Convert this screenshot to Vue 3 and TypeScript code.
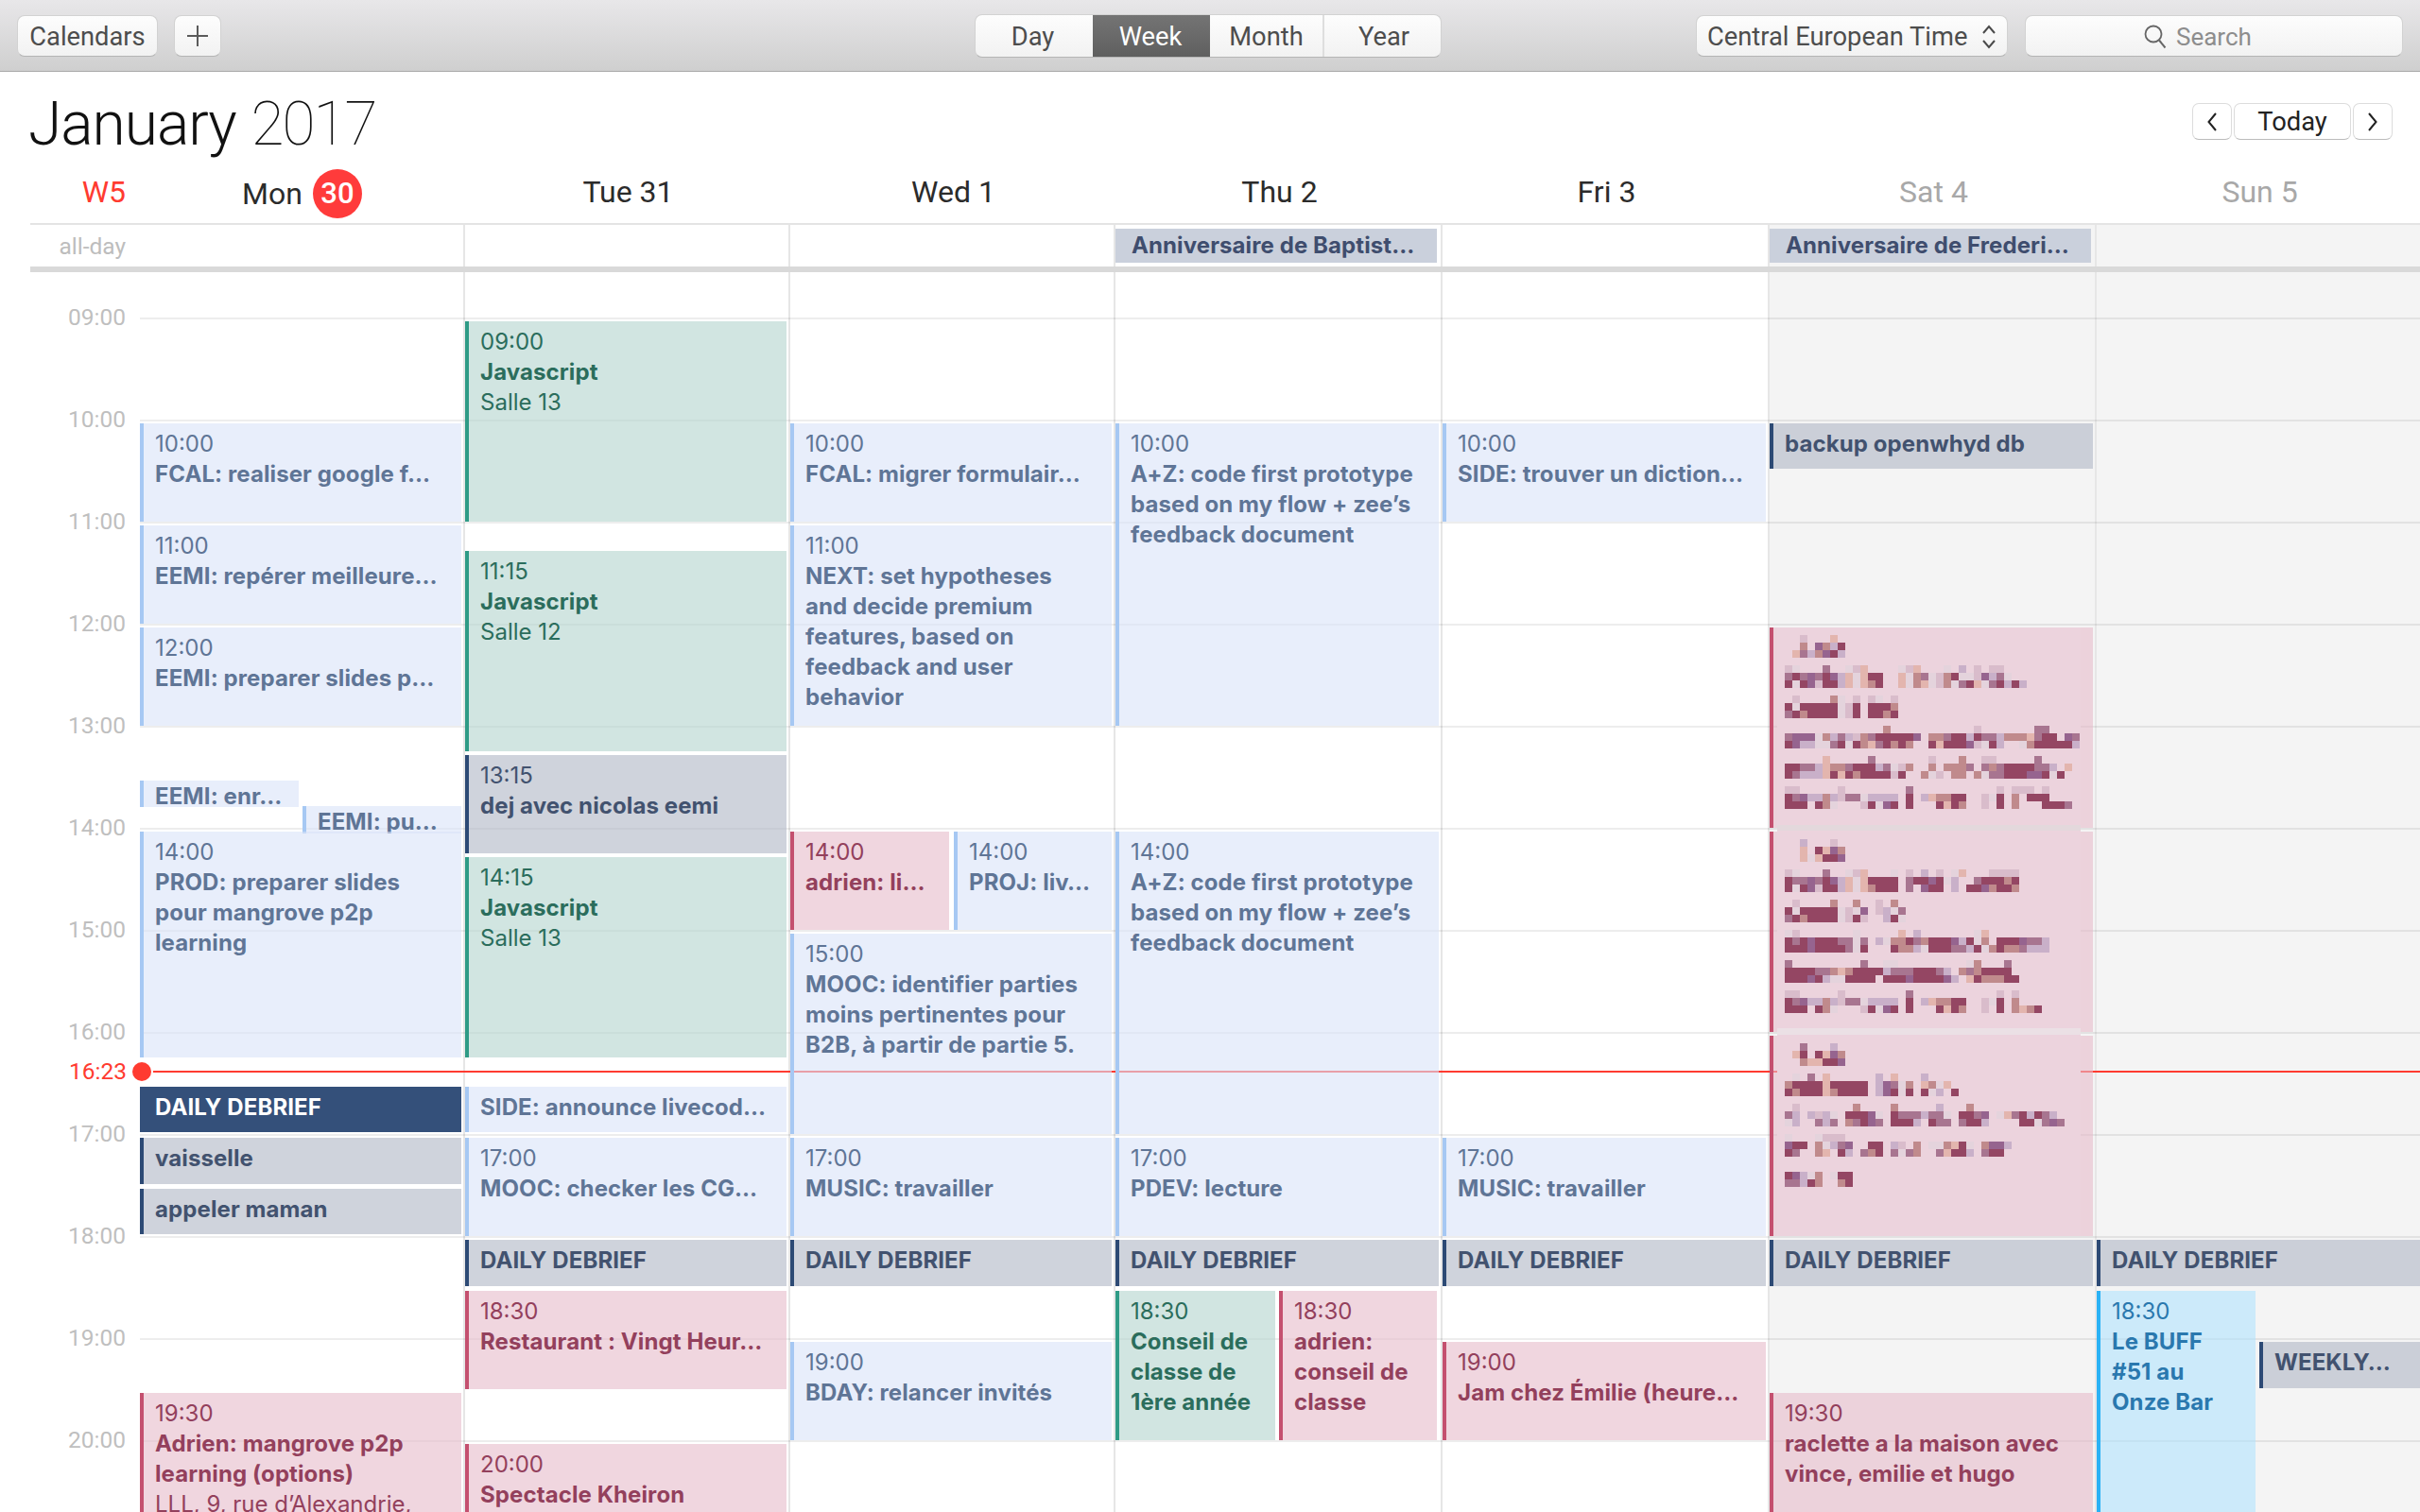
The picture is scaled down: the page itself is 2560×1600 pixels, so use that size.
<script setup lang="ts">
type Kind = 'blue' | 'pink' | 'green' | 'navy' | 'solid' | 'sky'
interface Ev {
  d: number
  s: number
  e: number
  c: Kind
  t?: string
  lines: string[]
  sub?: string[]
  x?: number
  w?: number
  short?: boolean
}

const days = [
  { label: 'Tue 31', muted: false },
  { label: 'Wed 1', muted: false },
  { label: 'Thu 2', muted: false },
  { label: 'Fri 3', muted: false },
  { label: 'Sat 4', muted: true },
  { label: 'Sun 5', muted: true },
]
const allDay = [
  '', '', '', 'Anniversaire de Baptist…', '', 'Anniversaire de Frederi…', '',
]
const hours = [9, 10, 11, 12, 13, 14, 15, 16, 17, 18, 19, 20]
const hourY = (h: number) => (h - 9) * 108 + 48
const colW = [344, 344, 344, 346, 346, 346, 348]

const evs: Ev[] = [
  // Monday
  { d: 0, s: 10, e: 11, c: 'blue', t: '10:00', lines: ['FCAL: realiser google f…'] },
  { d: 0, s: 11, e: 12, c: 'blue', t: '11:00', lines: ['EEMI: repérer meilleure…'] },
  { d: 0, s: 12, e: 13, c: 'blue', t: '12:00', lines: ['EEMI: preparer slides p…'] },
  { d: 0, s: 13.5, e: 13.8, c: 'blue', lines: ['EEMI: enr…'], w: 168, short: true },
  { d: 0, s: 13.75, e: 14.06, c: 'blue', lines: ['EEMI: pu…'], x: 174, w: 168, short: true },
  { d: 0, s: 14, e: 16.25, c: 'blue', t: '14:00', lines: ['PROD: preparer slides', 'pour mangrove p2p', 'learning'] },
  { d: 0, s: 16.5, e: 16.98, c: 'solid', lines: ['DAILY DEBRIEF'] },
  { d: 0, s: 17, e: 17.49, c: 'navy', lines: ['vaisselle'] },
  { d: 0, s: 17.5, e: 17.98, c: 'navy', lines: ['appeler maman'] },
  { d: 0, s: 19.5, e: 21, c: 'pink', t: '19:30', lines: ['Adrien: mangrove p2p', 'learning (options)'], sub: ['LLL, 9, rue d’Alexandrie,'] },
  // Tuesday
  { d: 1, s: 9, e: 11, c: 'green', t: '09:00', lines: ['Javascript'], sub: ['Salle 13'] },
  { d: 1, s: 11.25, e: 13.25, c: 'green', t: '11:15', lines: ['Javascript'], sub: ['Salle 12'] },
  { d: 1, s: 13.25, e: 14.25, c: 'navy', t: '13:15', lines: ['dej avec nicolas eemi'] },
  { d: 1, s: 14.25, e: 16.25, c: 'green', t: '14:15', lines: ['Javascript'], sub: ['Salle 13'] },
  { d: 1, s: 16.5, e: 16.98, c: 'blue', lines: ['SIDE: announce livecod…'] },
  { d: 1, s: 17, e: 18, c: 'blue', t: '17:00', lines: ['MOOC: checker les CG…'] },
  { d: 1, s: 18, e: 18.49, c: 'navy', lines: ['DAILY DEBRIEF'] },
  { d: 1, s: 18.5, e: 19.5, c: 'pink', t: '18:30', lines: ['Restaurant : Vingt Heur…'] },
  { d: 1, s: 20, e: 21, c: 'pink', t: '20:00', lines: ['Spectacle Kheiron'] },
  // Wednesday
  { d: 2, s: 10, e: 11, c: 'blue', t: '10:00', lines: ['FCAL: migrer formulair…'] },
  { d: 2, s: 11, e: 13, c: 'blue', t: '11:00', lines: ['NEXT: set hypotheses', 'and decide premium', 'features, based on', 'feedback and user', 'behavior'] },
  { d: 2, s: 14, e: 15, c: 'pink', t: '14:00', lines: ['adrien: li…'], w: 168 },
  { d: 2, s: 14, e: 15, c: 'blue', t: '14:00', lines: ['PROJ: liv…'], x: 175, w: 167 },
  { d: 2, s: 15, e: 17, c: 'blue', t: '15:00', lines: ['MOOC: identifier parties', 'moins pertinentes pour', 'B2B, à partir de partie 5.'] },
  { d: 2, s: 17, e: 18, c: 'blue', t: '17:00', lines: ['MUSIC: travailler'] },
  { d: 2, s: 18, e: 18.49, c: 'navy', lines: ['DAILY DEBRIEF'] },
  { d: 2, s: 19, e: 20, c: 'blue', t: '19:00', lines: ['BDAY: relancer invités'] },
  // Thursday
  { d: 3, s: 10, e: 13, c: 'blue', t: '10:00', lines: ['A+Z: code first prototype', 'based on my flow + zee’s', 'feedback document'] },
  { d: 3, s: 14, e: 17, c: 'blue', t: '14:00', lines: ['A+Z: code first prototype', 'based on my flow + zee’s', 'feedback document'] },
  { d: 3, s: 17, e: 18, c: 'blue', t: '17:00', lines: ['PDEV: lecture'] },
  { d: 3, s: 18, e: 18.49, c: 'navy', lines: ['DAILY DEBRIEF'] },
  { d: 3, s: 18.5, e: 20, c: 'green', t: '18:30', lines: ['Conseil de', 'classe de', '1ère année'], w: 169 },
  { d: 3, s: 18.5, e: 20, c: 'pink', t: '18:30', lines: ['adrien:', 'conseil de', 'classe'], x: 175, w: 167 },
  // Friday
  { d: 4, s: 10, e: 11, c: 'blue', t: '10:00', lines: ['SIDE: trouver un diction…'] },
  { d: 4, s: 17, e: 18, c: 'blue', t: '17:00', lines: ['MUSIC: travailler'] },
  { d: 4, s: 18, e: 18.49, c: 'navy', lines: ['DAILY DEBRIEF'] },
  { d: 4, s: 19, e: 20, c: 'pink', t: '19:00', lines: ['Jam chez Émilie (heure…'] },
  // Saturday
  { d: 5, s: 10, e: 10.48, c: 'navy', lines: ['backup openwhyd db'] },
  { d: 5, s: 12, e: 14, c: 'pink', lines: [] },
  { d: 5, s: 14, e: 16, c: 'pink', lines: [] },
  { d: 5, s: 16, e: 18, c: 'pink', lines: [] },
  { d: 5, s: 18, e: 18.49, c: 'navy', lines: ['DAILY DEBRIEF'] },
  { d: 5, s: 19.5, e: 21, c: 'pink', t: '19:30', lines: ['raclette a la maison avec', 'vince, emilie et hugo'] },
  // Sunday
  { d: 6, s: 18, e: 18.49, c: 'navy', lines: ['DAILY DEBRIEF'] },
  { d: 6, s: 18.5, e: 21, c: 'sky', t: '18:30', lines: ['Le BUFF', '#51 au', 'Onze Bar'], w: 168 },
  { d: 6, s: 19, e: 19.49, c: 'navy', lines: ['WEEKLY…'], x: 174, w: 174 },
]

const evStyle = (ev: Ev) => {
  const top = hourY(ev.s) + 4
  const bottom = hourY(ev.e)
  return {
    top: `${top}px`,
    height: `${bottom - top}px`,
    left: `${ev.x ?? 2}px`,
    width: `${ev.w ?? colW[ev.d] - 4}px`,
  }
}
const dayEvents = (d: number) => evs.filter((e) => e.d === d)

// Pixelated mosaic of the private Saturday events
const palette: Record<string, string> = {
  D: '#944663', M: '#a87590', V: '#96648f', R: '#c08a8c',
  L: '#c9b0c9', P: '#e3b5ae', F: '#d9bccb', A: '#e4d3dc',
}
const mosaic: { y: number; rows: string[] }[] = [
  { y: 8, rows: [
    '..F...P.', '..R.VRLD', '.PMLRVDL',
    'FA...M..AFP....AFP...A.L.F.FF', 'MDMVMDVLPAPDD..PARMAFRDAAFVLMA', 'DADVFDDLPAPRD..PARPAFRAMDPAMDLDL',
    '.F....RA.F.FA.F', 'DADDDDDAFD.DDDR', 'MDRDDDDAFD.DDRD',
    '.............R...........F.......MM', 'MVVVARLMLFRMDDDDDV.RRMDDLDMMLRRRPMDD.VM', 'DVLLAAMDADRPMDRDR..DPDDDVFADL..ARDDDDDL',
    '.....P.....M.......F...R..FF.....M', 'DDMMLPRRMDDDLMAFR..R.RRRM.MRMDDDDMML.P', 'DMLLLPDPDRDDDDFD..RAF.RR.RAMMDDDVVDAD',
    'FF.....F........M...........F.FFF.F', 'DMVLLRLFMMALLLL.D.LPRRDD..FAD.R.DDD', 'DDD.DRA...FDAVD.D...DPDR..F.D.R...DDDM',
  ] },
  { y: 224, rows: [
    '..L...F.', '..P.DPVR', '..PAPDDV',
    'FA...M..AFP...A.F.L.F.AP...FFFF', 'DMMVMDVLPAPDDDD.MDDVDAL..MDDDRD', 'DADVFDDLPAPRDDD.M.VDD.L.DDVRDDR',
    '.F....R..R..F.R', 'DADDDDDAFAV.FLAM', 'MDRDDDDAFDF..LDA',
    'AF.......A.....P.L.......AP', 'DMDVDDDMMAM.LARRDMRDDDVLDAR.DDDVMML', 'DDDVDDDDMAD...DRRLADDDMMLDARDRRMLLL',
    'M.........M..AA.........AR...M', 'DDDDMMRPRDDDDLMMMDDDML.RMRDDDD', 'DDDVDLAADDDD.DDDVDDDDVL.PDRRRDD',
    'FF.....F........M...........F.F', 'DMVLLRLFMMALLLL.D.LPRRDD..FAD.R', 'DDD.DRA...FDAVD.D...DPDR..F.D.RPRD',
  ] },
  { y: 440, rows: [
    '..M...L.', '.PD.DPVR', '..RPPDDV',
    '.A.M.P......L.P...L', 'RDDDDPDDDDD.LVMAR.PRAP', 'DRDDDPRDDDD.LVDAD.DAL.D',
    '.F.......R....R.....L...R', 'ML.LFLA.DDDVA.DMMMLMMA.DDMV.APMDLDML', 'AL..MLM.RMDVM.DDDL.DMM.MDDL....DDAMVM',
    'A...AFFF', 'VDD.RALMV..DD.LF.R.AARPDA.RVVL', 'DM..RP.DL.MRD.MAMR..MPDDL.MDD',
    '', 'DVLAR.ADD', 'MMLDR..RD',
  ] },
]
const blocks = mosaic.flatMap((m) =>
  m.rows.flatMap((row, r) =>
    [...row].flatMap((ch, c) =>
      palette[ch]
        ? [{ key: `${m.y}-${r}-${c}`, x: 8 + c * 8, y: m.y + Math.floor(r / 3) * 32 + (r % 3) * 8, fill: palette[ch] }]
        : [],
    ),
  ),
)
</script>

<template>
  <div class="window">
    <header class="toolbar">
      <button class="btn cal-btn">Calendars</button>
      <button class="btn plus-btn" aria-label="Add">
        <svg width="24" height="24" viewBox="0 0 24 24"><path d="M12 1v22M1 12h22" stroke="#5b5b5b" stroke-width="2" fill="none" /></svg>
      </button>
      <nav class="seg">
        <span class="seg-item day">Day</span>
        <span class="seg-item week">Week</span>
        <span class="seg-item month">Month</span>
        <span class="seg-item year">Year</span>
      </nav>
      <button class="btn tz-btn">
        <span>Central European Time</span>
        <svg width="16" height="26" viewBox="0 0 16 26"><path d="M2 9l6-7 6 7M2 17l6 7 6-7" stroke="#4a4a4a" stroke-width="2" fill="none" /></svg>
      </button>
      <div class="btn search">
        <svg width="24" height="26" viewBox="0 0 24 26"><circle cx="10" cy="10" r="8.5" stroke="#666" stroke-width="1.8" fill="none" /><path d="M16 16.5l6.5 8" stroke="#666" stroke-width="2" fill="none" /></svg>
        <span>Search</span>
      </div>
    </header>

    <section class="title-row">
      <h1 class="title"><span class="month-name">January</span> <span class="year-name">2017</span></h1>
      <div class="nav">
        <button class="nav-btn arrow" aria-label="Previous">
          <svg width="12" height="22" viewBox="0 0 12 22"><path d="M10 2L2.5 11l7.5 9" stroke="#222" stroke-width="2" fill="none" /></svg>
        </button>
        <button class="nav-btn today">Today</button>
        <button class="nav-btn arrow" aria-label="Next">
          <svg width="12" height="22" viewBox="0 0 12 22"><path d="M2 2l7.5 9L2 20" stroke="#222" stroke-width="2" fill="none" /></svg>
        </button>
      </div>
    </section>

    <section class="day-head">
      <div class="week-no">W5</div>
      <div class="day-name mon">
        <span class="mon-text">Mon</span>
        <span class="badge">30</span>
      </div>
      <div v-for="d in days" :key="d.label" class="day-name" :class="{ muted: d.muted }">{{ d.label }}</div>
    </section>

    <section class="all-day">
      <div class="all-day-label">all-day</div>
      <div
        v-for="(title, i) in allDay"
        :key="i"
        class="all-day-cell"
        :class="{ first: i === 0, weekend: i >= 5 }"
      >
        <div v-if="title" class="all-day-event">{{ title }}</div>
      </div>
    </section>

    <section class="grid">
      <div class="col-layer">
        <div class="gutter"></div>
        <div
          v-for="i in 7"
          :key="i"
          class="bg-col"
          :class="{ first: i === 1, weekend: i >= 6 }"
        ></div>
      </div>

      <div v-for="h in hours" :key="h" class="hour-line" :style="{ top: `${hourY(h)}px` }"></div>
      <div v-for="h in hours" :key="'l' + h" class="hour-label" :style="{ top: `${hourY(h) - 16}px` }">
        {{ String(h).padStart(2, '0') }}:00
      </div>

      <div class="now-label">16:23</div>
      <div class="now-dot"></div>
      <div class="now-line"></div>

      <div class="col-layer events">
        <div class="gutter"></div>
        <div v-for="(_, d) in 7" :key="d" class="ev-col">
          <article
            v-for="(ev, j) in dayEvents(d)"
            :key="j"
            class="event"
            :class="[ev.c, { short: ev.short }]"
            :style="evStyle(ev)"
          >
            <div v-if="ev.t" class="ln">{{ ev.t }}</div>
            <div v-for="l in ev.lines" :key="l" class="ln b">{{ l }}</div>
            <div v-for="l in ev.sub ?? []" :key="l" class="ln">{{ l }}</div>
          </article>
          <svg v-if="d === 5" class="mosaic" width="321" height="644" viewBox="0 0 321 644" shape-rendering="crispEdges">
            <rect x="0" y="0" width="321" height="209" fill="#ecd3dd" />
            <rect x="0" y="209" width="321" height="6" fill="#e3d8dc" />
            <rect x="0" y="215" width="321" height="209" fill="#ecd3dd" />
            <rect x="0" y="424" width="321" height="7" fill="#ebe0e5" />
            <rect x="0" y="431" width="321" height="213" fill="#ecd3dd" />
            <rect v-for="b in blocks" :key="b.key" :x="b.x" :y="b.y" width="8" height="8" :fill="b.fill" />
          </svg>
        </div>
      </div>
    </section>
  </div>
</template>

<style>
html, body { margin: 0; background: #fff; overflow: hidden; }
</style>

<style scoped>
* { box-sizing: border-box; }
.window {
  width: 2560px;
  height: 1600px;
  overflow: hidden;
  font-family: Roboto, "Liberation Sans", sans-serif;
  background: #fff;
  display: flex;
  flex-direction: column;
}
.toolbar {
  height: 76px;
  flex: none;
  display: flex;
  align-items: flex-start;
  padding: 16px 0 0 18px;
  background: linear-gradient(#e8e7e9, #cfcfcf);
  border-bottom: 1px solid #a9a9a9;
}
.btn {
  height: 44px;
  border: 1px solid #d2d2d2;
  border-bottom-color: #b5b5b5;
  border-radius: 8px;
  background: linear-gradient(#fdfdfd, #f2f2f2);
  font: 400 27.3px Roboto, sans-serif;
  color: #4d4d4d;
  padding: 2px 0 0;
  display: flex;
  align-items: center;
}
.cal-btn { width: 149px; justify-content: center; }
.plus-btn { width: 50px; margin-left: 17px; justify-content: center; padding-top: 0; }
.seg {
  width: 494px;
  height: 46px;
  margin-left: 797px;
  margin-top: -1px;
  display: flex;
  border: 1px solid #d2d2d2;
  border-bottom-color: #b5b5b5;
  border-radius: 8px;
  background: linear-gradient(#fdfdfd, #f2f2f2);
  overflow: hidden;
  font-size: 27.3px;
  color: #4d4d4d;
}
.seg-item { display: flex; align-items: center; justify-content: center; padding-top: 2px; }
.day { width: 124px; padding-right: 3px; }
.week { width: 124px; background: linear-gradient(#747474, #5f5f5f); color: #fff; padding-right: 2px; }
.month { width: 121px; border-right: 2px solid #dedede; }
.year { flex: 1; padding-left: 3px; }
.tz-btn { width: 330px; margin-left: 269px; padding: 2px 11px 0; justify-content: space-between; }
.search { width: 400px; margin-left: 18px; justify-content: flex-start; padding-left: 125px; gap: 10px; color: #8d8d8d; font-size: 26px; }

.title-row {
  height: 99px;
  flex: none;
  display: flex;
  justify-content: space-between;
  padding: 0 29px 0 30px;
}
.title {
  margin: 18px 0 0;
  font-size: 64px;
  line-height: 75px;
  color: #111;
  font-weight: 300;
}
.month-name { letter-spacing: -1px; }
.year-name { font-weight: 100; letter-spacing: -2px; }
.nav { display: flex; margin-top: 33px; gap: 2px; height: 39px; }
.nav-btn {
  border: 1px solid #dcdcdc;
  border-bottom-color: #bbb;
  border-radius: 7px;
  background: #fff;
  height: 39px;
  padding: 0;
  font: 400 27.3px Roboto, sans-serif;
  color: #222;
  display: flex;
  align-items: center;
  justify-content: center;
}
.arrow { width: 42px; }
.today { width: 124px; padding-top: 1px; }

.day-head {
  height: 61px;
  flex: none;
  display: grid;
  grid-template-columns: 146px 344px 344px 344px 346px 346px 346px 344px;
  align-items: center;
  font-size: 32px;
  color: #2b2b2b;
}
.week-no { color: #ff3b30; text-align: right; padding-right: 13px; margin-top: -6px; }
.day-name { text-align: center; margin-top: -6px; padding-left: 5px; }
.day-name.muted { color: #a8a8a8; }
.mon { display: flex; align-items: center; justify-content: center; gap: 11px; margin-top: -2px; padding-left: 3px; }
.badge {
  width: 52px;
  height: 52px;
  border-radius: 50%;
  background: #ff3b3b;
  color: #fff;
  font-weight: 500;
  font-size: 31px;
  display: flex;
  align-items: center;
  justify-content: center;
}

.all-day {
  height: 46px;
  margin-left: 32px;
  flex: none;
  border-top: 2px solid #e4e4e4;
  display: grid;
  grid-template-columns: 114px 344px 344px 344px 346px 346px 346px 344px;
}
.all-day-label { color: #bdbdbd; font-size: 24.5px; text-align: right; padding: 8px 13px 0 0; line-height: 30px; }
.all-day-cell { border-left: 2px solid #e6e6e6; padding: 4px 4px 0 0; }
.all-day-cell.first { border-left: 0; }
.all-day-cell.weekend { background: #f4f4f4; }
.all-day-event {
  height: 36px;
  background: #cad0dc;
  color: #3f4d6e;
  font-family: Inter, sans-serif;
  font-weight: 700;
  font-size: 24px;
  letter-spacing: 0.1px;
  line-height: 36px;
  padding-left: 17px;
  white-space: nowrap;
  overflow: hidden;
}

.grid {
  position: relative;
  height: 1318px;
  flex: none;
  margin-left: 32px;
  border-top: 6px solid #d9d9d9;
  overflow: hidden;
}
.col-layer {
  position: absolute;
  inset: 0 0 0 -32px;
  display: grid;
  grid-template-columns: 146px 344px 344px 344px 346px 346px 346px 344px;
}
.bg-col { border-left: 2px solid #e6e6e6; }
.bg-col.first { border-left: 0; }
.bg-col.weekend { background: #f4f4f4; }
.hour-line { position: absolute; left: 116px; right: 0; height: 2px; background: rgba(0, 0, 0, 0.07); }
.hour-label {
  position: absolute;
  left: -32px;
  width: 133px;
  text-align: right;
  color: #bfbfbf;
  font-size: 24.5px;
  line-height: 32px;
}
.now-label {
  position: absolute;
  left: -32px;
  width: 134px;
  top: 830px;
  text-align: right;
  color: #ff3b30;
  font-size: 24.5px;
  line-height: 32px;
  background: #fff;
}
.now-dot { position: absolute; left: 108px; top: 836px; width: 20px; height: 20px; border-radius: 50%; background: #ff3b30; }
.now-line { position: absolute; left: 130px; right: 0; top: 845px; height: 2px; background: #ff3b30; }
.events { pointer-events: none; }
.ev-col { position: relative; }
.event {
  position: absolute;
  padding: 6px 0 0 12px;
  border-left: 4px solid;
  overflow: hidden;
  font-family: Inter, sans-serif;
  font-size: 24px;
  line-height: 32px;
  white-space: nowrap;
}
.event.short { padding-top: 3px; line-height: 28px; }
.ln.b { font-weight: 700; letter-spacing: 0.1px; }
.blue { background: rgba(217, 227, 248, 0.6); border-color: #a6c8f3; color: #5f7596; }
.pink { background: rgba(230, 187, 202, 0.6); border-color: #c4506f; color: #93405c; }
.green { background: rgba(178, 212, 205, 0.6); border-color: #2f9b86; color: #2b6d5c; }
.navy { background: rgba(175, 182, 197, 0.6); border-color: #2d4a75; color: #42526f; }
.solid { background: #34507a; border-color: #34507a; color: #fff; }
.sky { background: rgba(177, 227, 254, 0.6); border-color: #2ab2f5; color: #2a78ae; }
.mosaic { position: absolute; left: 10px; top: 376px; }
</style>
